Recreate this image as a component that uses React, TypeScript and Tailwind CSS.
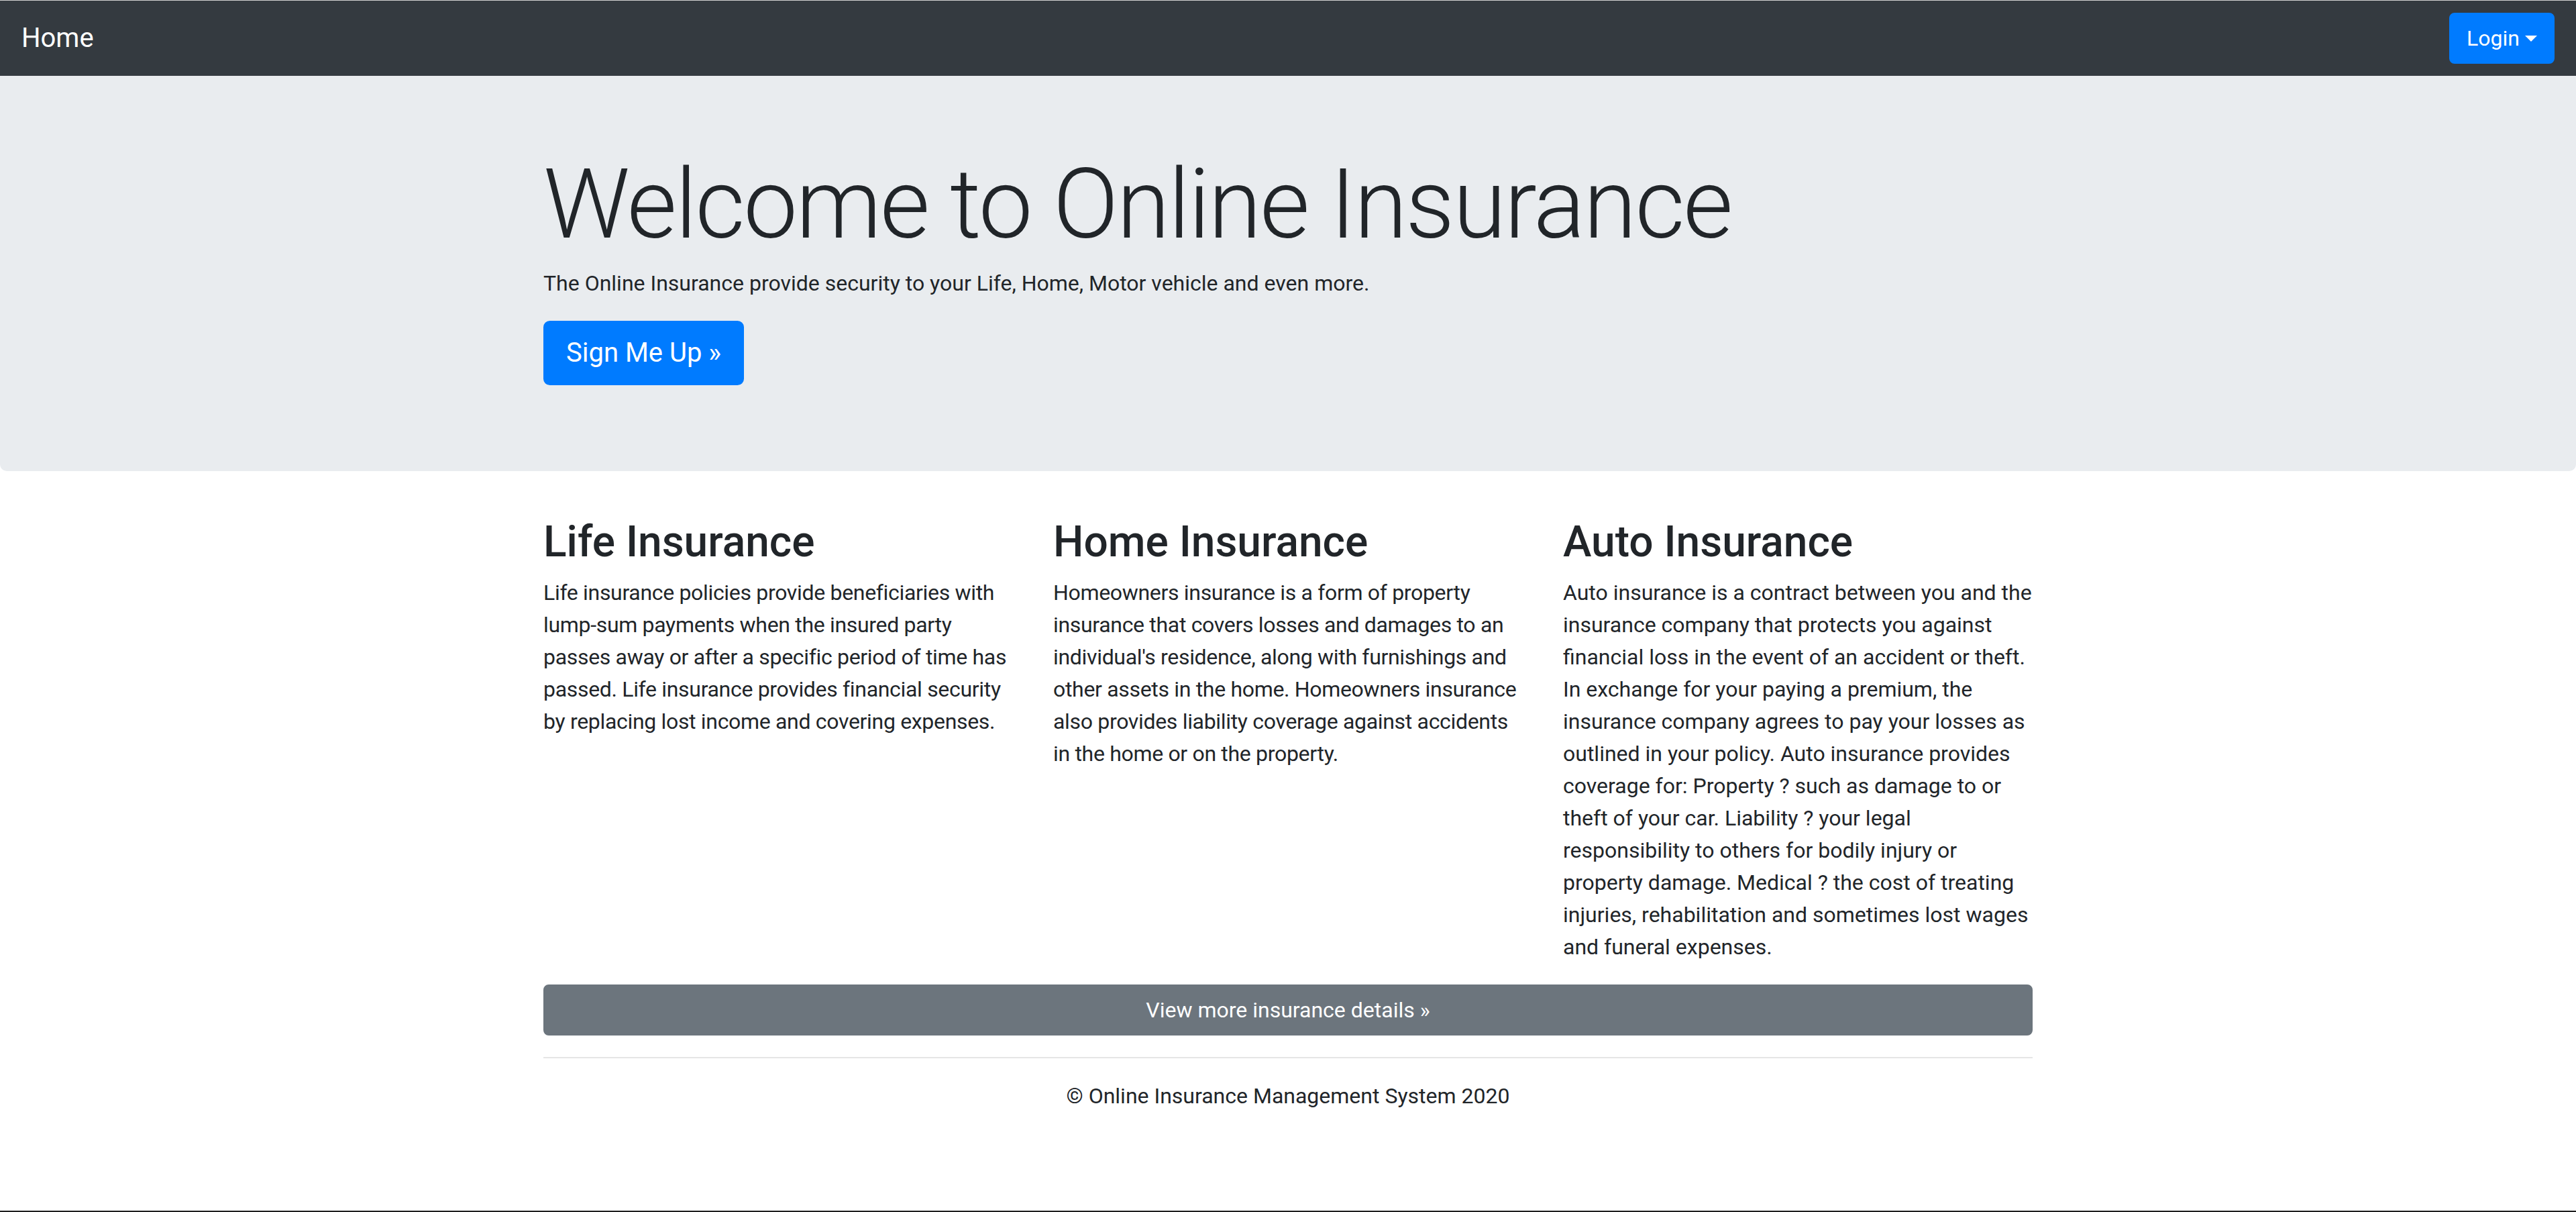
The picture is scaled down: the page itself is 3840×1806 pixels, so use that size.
const paragraphs = [
  {
    title: "Life Insurance",
    tight: true,
    body: "Life insurance policies provide beneficiaries with lump-sum payments when the insured party passes away or after a specific period of time has passed. Life insurance provides financial security by replacing lost income and covering expenses.",
  },
  {
    title: "Home Insurance",
    tight: true,
    body: "Homeowners insurance is a form of property insurance that covers losses and damages to an individual's residence, along with furnishings and other assets in the home. Homeowners insurance also provides liability coverage against accidents in the home or on the property.",
  },
  {
    title: "Auto Insurance",
    tight: false,
    body: "Auto insurance is a contract between you and the insurance company that protects you against financial loss in the event of an accident or theft. In exchange for your paying a premium, the insurance company agrees to pay your losses as outlined in your policy. Auto insurance provides coverage for: Property ? such as damage to or theft of your car. Liability ? your legal responsibility to others for bodily injury or property damage. Medical ? the cost of treating injuries, rehabilitation and sometimes lost wages and funeral expenses.",
  },
];

export default function App() {
  return (
    <div className="flex min-h-screen flex-col bg-white font-['Segoe_UI','Roboto','Liberation_Sans',sans-serif] text-[32px] leading-[48px] text-[#212529]">
      <div className="h-px bg-[#d2d2d2]" />

      {/* Navbar */}
      <nav className="flex items-center justify-between bg-[#343a40] px-8 py-4">
        <a href="#" className="py-[10px] text-[40px] leading-[60px] text-white">
          Home
        </a>
        <button className="flex items-center rounded-[8px] border-2 border-[#007bff] bg-[#007bff] px-6 py-3 text-[32px] leading-[48px] text-white">
          Login
          <span className="ml-[8px] inline-block h-0 w-0 border-x-[9.6px] border-t-[9.6px] border-x-transparent border-t-white" />
        </button>
      </nav>

      {/* Jumbotron */}
      <section className="mb-16 rounded-b-[10px] bg-[#e9ecef] pb-24 pt-[106px]">
        <div className="mx-auto w-full max-w-[2280px] px-[30px]">
          <h1 className="mb-[6px] text-[144px] font-light leading-[1.2] tracking-[-0.017em]">
            Welcome to Online Insurance
          </h1>
          <p className="mb-8">The Online Insurance provide security to your Life, Home, Motor vehicle and even more.</p>
          <p className="mb-8">
            <a
              href="#"
              className="inline-block rounded-[9.6px] border-2 border-[#007bff] bg-[#007bff] px-8 py-4 text-[40px] leading-[60px] text-white"
            >
              Sign Me Up &raquo;
            </a>
          </p>
        </div>
      </section>

      {/* Insurance types */}
      <main className="mx-auto w-full max-w-[2280px] px-[30px]">
        <div className="grid grid-cols-3 gap-x-[60px]">
          {paragraphs.map((p) => (
            <div key={p.title}>
              <h2 className="mb-[12px] pt-[4px] text-[64px] font-medium leading-[1.2]">{p.title}</h2>
              <p className={p.tight ? "mb-8 tracking-[-0.01em]" : "mb-8"}>{p.body}</p>
            </div>
          ))}
        </div>
        <p className="mb-8">
          <a
            href="#"
            className="block rounded-[8px] border-2 border-[#6c757d] bg-[#6c757d] px-6 py-3 text-center text-white"
          >
            View more insurance details &raquo;
          </a>
        </p>
        <hr className="my-8 border-t-2 border-[rgba(0,0,0,0.1)]" />
        <footer>
          <p className="mb-8 text-center">&copy; Online Insurance Management System 2020</p>
        </footer>
      </main>

      <div className="mt-auto h-[2px] bg-[#1e1e1e]" />
    </div>
  );
}
